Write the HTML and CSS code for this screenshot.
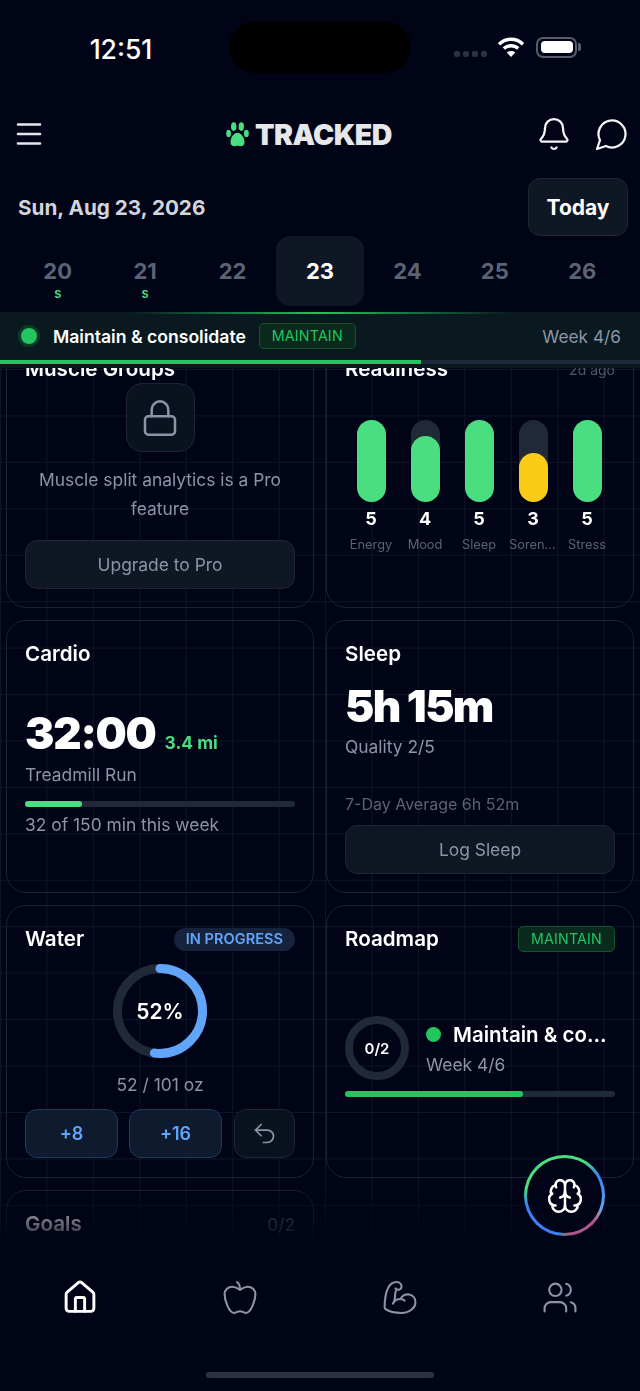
FILE: index.html
```html
<!DOCTYPE html>
<html lang="en">

<head>
  <meta charset="UTF-8">
  <meta name="viewport" content="width=device-width, initial-scale=1.0">
  <title>Tracked</title>
  <link rel="stylesheet" href="styles.css">
</head>

<body>
  <div class="app">
    <div class="status-bar">
      <div class="status-time">12:51</div>
      <div class="island"></div>
      <div class="status-right">
        <div class="signal"><span></span><span></span><span></span><span></span></div>
        <svg class="wifi" width="28" height="22" viewBox="0 0 28 22" fill="none" stroke="#fff" stroke-width="3.4">
          <path d="M2 8.2C9 1.6 19 1.6 26 8.2" />
          <path d="M6.8 12.6C11 8.8 17 8.8 21.2 12.6" />
          <path d="M14 21l-4.2-4.6c2.4-1.9 6-1.9 8.4 0z" fill="#fff" stroke="none" />
        </svg>
        <div class="battery"><div class="battery-fill"></div></div>
        <div class="battery-tip"></div>
      </div>
    </div>

    <header class="top-bar">
      <svg class="menu-icon" width="26" height="24" viewBox="0 0 26 24" fill="none" stroke="#e5e7eb" stroke-width="2.6" stroke-linecap="round">
        <path d="M2 2.5h22M2 12h22M2 21.5h22" />
      </svg>
      <div class="logo">
        <svg width="23" height="25" viewBox="0 0 23 25" fill="#4ade80">
          <ellipse cx="7.7" cy="4.6" rx="2.7" ry="4.3" />
          <ellipse cx="15.3" cy="4.6" rx="2.7" ry="4.3" />
          <ellipse cx="2.6" cy="11.4" rx="2.4" ry="3.7" />
          <ellipse cx="20.4" cy="11.4" rx="2.4" ry="3.7" />
          <path d="M11.5 10.8c-3.6 0-7 4.6-7 9.4 0 4.6 4.6 4.6 7 3.2 2.4 1.4 7 1.4 7-3.2 0-4.8-3.4-9.4-7-9.4z" />
        </svg>
        <span>TRACKED</span>
      </div>
      <div class="top-actions">
        <svg width="36" height="36" viewBox="0 0 24 24" fill="none" stroke="#f3f4f6" stroke-width="1.5" stroke-linecap="round" stroke-linejoin="round">
          <path d="M10.268 21a2 2 0 0 0 3.464 0" />
          <path d="M3.262 15.326A1 1 0 0 0 4 17h16a1 1 0 0 0 .74-1.673C19.41 13.956 18 12.499 18 8A6 6 0 0 0 6 8c0 4.499-1.411 5.956-2.738 7.326" />
        </svg>
        <svg width="36" height="36" viewBox="0 0 24 24" fill="none" stroke="#f3f4f6" stroke-width="1.5" stroke-linecap="round" stroke-linejoin="round">
          <path d="M7.9 20A9 9 0 1 0 4 16.1L2 22Z" />
        </svg>
      </div>
    </header>

    <div class="date-row">
      <div class="date-label">Sun, Aug 23, 2026</div>
      <button class="today-btn">Today</button>
    </div>

    <div class="week-strip">
      <div class="day"><span class="day-num">20</span><span class="day-mark">s</span></div>
      <div class="day"><span class="day-num">21</span><span class="day-mark">s</span></div>
      <div class="day"><span class="day-num">22</span></div>
      <div class="day selected"><span class="day-num">23</span></div>
      <div class="day"><span class="day-num">24</span></div>
      <div class="day"><span class="day-num">25</span></div>
      <div class="day"><span class="day-num">26</span></div>
    </div>

    <div class="phase-banner">
      <div class="phase-glow"></div>
      <div class="phase-row">
        <span class="phase-dot"></span>
        <span class="phase-name">Maintain &amp; consolidate</span>
        <span class="tag">MAINTAIN</span>
        <span class="phase-week">Week 4/6</span>
      </div>
      <div class="phase-progress"><div class="phase-progress-fill" style="width: 65.8%"></div></div>
    </div>

    <main class="scroller">
      <div class="cards">
        <section class="card">
          <h2 class="card-title">Muscle Groups</h2>
          <div class="lock-box">
            <svg width="40" height="40" viewBox="0 0 24 24" fill="none" stroke="#8b95a7" stroke-width="1.5" stroke-linecap="round" stroke-linejoin="round">
              <rect x="3" y="11" width="18" height="11" rx="2" />
              <path d="M7 11V7a5 5 0 0 1 10 0v4" />
            </svg>
          </div>
          <p class="pro-text">Muscle split analytics is a Pro feature</p>
          <button class="soft-btn pro-btn">Upgrade to Pro</button>
        </section>

        <section class="card">
          <div class="card-head">
            <h2 class="card-title">Readiness</h2>
            <span class="ago">2d ago</span>
          </div>
          <div class="readiness">
            <div class="metric">
              <div class="pill"><div class="pill-fill" style="height: 100%"></div></div>
              <div class="metric-val">5</div>
              <div class="metric-label">Energy</div>
            </div>
            <div class="metric">
              <div class="pill"><div class="pill-fill" style="height: 80%"></div></div>
              <div class="metric-val">4</div>
              <div class="metric-label">Mood</div>
            </div>
            <div class="metric">
              <div class="pill"><div class="pill-fill" style="height: 100%"></div></div>
              <div class="metric-val">5</div>
              <div class="metric-label">Sleep</div>
            </div>
            <div class="metric">
              <div class="pill"><div class="pill-fill warn" style="height: 60%"></div></div>
              <div class="metric-val">3</div>
              <div class="metric-label">Soreness</div>
            </div>
            <div class="metric">
              <div class="pill"><div class="pill-fill" style="height: 100%"></div></div>
              <div class="metric-val">5</div>
              <div class="metric-label">Stress</div>
            </div>
          </div>
        </section>

        <section class="card">
          <h2 class="card-title">Cardio</h2>
          <div class="cardio-main">
            <span class="big-num">32:00</span>
            <span class="cardio-dist">3.4 mi</span>
          </div>
          <div class="muted-line">Treadmill Run</div>
          <div class="bar cardio-bar"><div class="bar-fill light" style="width: 21%"></div></div>
          <div class="muted-line cardio-week">32 of 150 min this week</div>
        </section>

        <section class="card">
          <h2 class="card-title">Sleep</h2>
          <div class="big-num sleep-num">5h 15m</div>
          <div class="muted-line">Quality 2/5</div>
          <div class="sleep-avg">7-Day Average 6h 52m</div>
          <button class="soft-btn sleep-btn">Log Sleep</button>
        </section>

        <section class="card">
          <div class="card-head">
            <h2 class="card-title">Water</h2>
            <span class="status-pill">IN PROGRESS</span>
          </div>
          <div class="water-ring">
            <svg width="94" height="94" viewBox="0 0 94 94" fill="none" stroke-width="9">
              <circle cx="47" cy="47" r="42.5" stroke="#1f2937" />
              <circle cx="47" cy="47" r="42.5" stroke="#60a5fa" stroke-linecap="round" stroke-dasharray="139 267" transform="rotate(-90 47 47)" />
            </svg>
            <span class="ring-text">52%</span>
          </div>
          <div class="muted-line water-amount">52 / 101 oz</div>
          <div class="water-btns">
            <button class="water-btn">+8</button>
            <button class="water-btn">+16</button>
            <button class="water-btn undo">
              <svg width="27" height="27" viewBox="0 0 24 24" fill="none" stroke="#8b95a7" stroke-width="1.5" stroke-linecap="round" stroke-linejoin="round">
                <path d="M9 14 4 9l5-5" />
                <path d="M4 9h10.5a5.5 5.5 0 0 1 5.5 5.5a5.5 5.5 0 0 1-5.5 5.5H11" />
              </svg>
            </button>
          </div>
        </section>

        <section class="card">
          <div class="card-head">
            <h2 class="card-title">Roadmap</h2>
            <span class="tag">MAINTAIN</span>
          </div>
          <div class="road-row">
            <div class="road-ring">0/2</div>
            <div class="road-info">
              <div class="road-name-row">
                <span class="road-dot"></span>
                <span class="road-name">Maintain &amp; consolidate</span>
              </div>
              <div class="muted-line">Week 4/6</div>
            </div>
          </div>
          <div class="bar road-bar"><div class="bar-fill" style="width: 66%"></div></div>
        </section>

        <section class="card">
          <div class="card-head">
            <h2 class="card-title">Goals</h2>
            <span class="goal-count">0/2</span>
          </div>
        </section>
      </div>
    </main>

    <nav class="bottom-nav">
      <div class="nav-icons">
        <svg width="37" height="37" viewBox="0 0 24 24" fill="none" stroke="#fff" stroke-width="1.9" stroke-linecap="round" stroke-linejoin="round">
          <path d="M15 21v-8a1 1 0 0 0-1-1h-4a1 1 0 0 0-1 1v8" />
          <path d="M3 10a2 2 0 0 1 .709-1.528l7-5.999a2 2 0 0 1 2.582 0l7 5.999A2 2 0 0 1 21 10v9a2 2 0 0 1-2 2H5a2 2 0 0 1-2-2z" />
        </svg>
        <svg width="37" height="37" viewBox="0 0 24 24" fill="none" stroke="#8b95a7" stroke-width="1.35" stroke-linecap="round" stroke-linejoin="round">
          <path d="M12 20.94c1.5 0 2.75 1.06 4 1.06 3 0 6-8 6-12.22A4.91 4.91 0 0 0 17 5c-2.22 0-4 1.44-5 2-1-.56-2.78-2-5-2a4.9 4.9 0 0 0-5 4.78C2 14 5 22 8 22c1.25 0 2.5-1.06 4-1.06Z" />
          <path d="M10 2c1 .5 2 2 2 5" />
        </svg>
        <svg width="37" height="37" viewBox="0 0 24 24" fill="none" stroke="#8b95a7" stroke-width="1.35" stroke-linecap="round" stroke-linejoin="round">
          <path d="M12.409 13.017A5 5 0 0 1 22 15c0 3.866-4 7-9 7-4.077 0-8.153-.82-10.371-2.462-.426-.316-.631-.832-.62-1.362C2.118 12.723 2.627 2 10 2a3 3 0 0 1 3 3 2 2 0 0 1-2 2c-1.105 0-1.64-.444-2-1" />
          <path d="M15 14a5 5 0 0 0-7.584 2" />
          <path d="M9.964 6.825C8.019 7.977 9.5 13 8 15" />
        </svg>
        <svg width="37" height="37" viewBox="0 0 24 24" fill="none" stroke="#8b95a7" stroke-width="1.35" stroke-linecap="round" stroke-linejoin="round">
          <path d="M16 21v-2a4 4 0 0 0-4-4H6a4 4 0 0 0-4 4v2" />
          <circle cx="9" cy="7" r="4" />
          <path d="M22 21v-2a4 4 0 0 0-3-3.87" />
          <path d="M16 3.13a4 4 0 0 1 0 7.75" />
        </svg>
      </div>
      <div class="home-indicator"></div>
    </nav>

    <button class="ai-fab">
      <span class="ai-fab-inner">
        <svg width="38" height="38" viewBox="0 0 24 24" fill="none" stroke="#fff" stroke-width="1.6" stroke-linecap="round" stroke-linejoin="round">
          <path d="M12 18V5" />
          <path d="M15 13a4.17 4.17 0 0 1-3-4 4.17 4.17 0 0 1-3 4" />
          <path d="M17.598 6.5A3 3 0 1 0 12 5a3 3 0 1 0-5.598 1.5" />
          <path d="M17.997 5.125a4 4 0 0 1 2.526 5.77" />
          <path d="M18 18a4 4 0 0 0 2-7.464" />
          <path d="M19.967 17.483A4 4 0 1 1 12 18a4 4 0 1 1-7.967-.517" />
          <path d="M6 18a4 4 0 0 1-2-7.464" />
          <path d="M6.003 5.125a4 4 0 0 0-2.526 5.77" />
        </svg>
      </span>
    </button>
  </div>
</body>

</html>
```

FILE: styles.css
```css
* {
  box-sizing: border-box;
}

body {
  margin: 0;
  background-color: #010417;
  color: #fff;
  font-family: Inter, "Liberation Sans", sans-serif;
}

button {
  font-family: inherit;
  cursor: pointer;
}

.app {
  position: relative;
  width: 640px;
  height: 1391px;
  display: flex;
  flex-direction: column;
  overflow: hidden;
  background-color: #010417;
}

/* status bar */
.status-bar {
  height: 100px;
  padding-top: 21px;
  display: flex;
  align-items: flex-start;
}

.status-time {
  width: 229px;
  padding-left: 13px;
  height: 52px;
  line-height: 56px;
  text-align: center;
  font-size: 26.5px;
  font-weight: 500;
}

.island {
  width: 182px;
  height: 52px;
  border-radius: 26px;
  background-color: #000;
}

.status-right {
  height: 52px;
  padding-left: 43px;
  display: flex;
  align-items: center;
}

.signal {
  display: flex;
  gap: 3px;
  margin-top: 14px;
}

.signal span {
  width: 6px;
  height: 6px;
  border-radius: 2px;
  background-color: #2d3240;
}

.wifi {
  margin-left: 10px;
}

.battery {
  width: 41px;
  height: 21px;
  margin-left: 11px;
  padding: 2.5px;
  border: 2px solid #555c6e;
  border-radius: 7px;
}

.battery-fill {
  height: 100%;
  border-radius: 4px;
  background-color: #fff;
}

.battery-tip {
  width: 3px;
  height: 8px;
  margin-left: 1px;
  border-radius: 0 2px 2px 0;
  background-color: #555c6e;
}

/* header */
.top-bar {
  height: 68px;
  padding: 0 10px 0 16px;
  display: flex;
  align-items: center;
}

.logo {
  margin-left: 184px;
  display: flex;
  align-items: center;
  gap: 6px;
  color: #e5e7eb;
  font-size: 28.5px;
  font-weight: 900;
  letter-spacing: -0.6px;
}

.top-actions {
  margin-left: auto;
  display: flex;
  gap: 22px;
}

.date-row {
  height: 68px;
  padding: 10px 12px 0 18px;
  display: flex;
  align-items: flex-start;
  justify-content: space-between;
}

.date-label {
  height: 58px;
  line-height: 60px;
  color: #d1d5db;
  font-size: 20.7px;
  font-weight: 700;
}

.today-btn {
  width: 100px;
  height: 58px;
  border: 1px solid #1c2636;
  border-radius: 12px;
  background-color: #0f1724;
  color: #fff;
  font-size: 21px;
  font-weight: 700;
}

/* week */
.week-strip {
  height: 76px;
  padding: 0 14px 6px;
  display: flex;
}

.day {
  flex: 1;
  height: 70px;
  padding-top: 21px;
  border-radius: 14px;
  display: flex;
  flex-direction: column;
  align-items: center;
}

.day.selected {
  background-color: #0f1724;
}

.day-num {
  line-height: 28px;
  color: #5a6374;
  font-size: 22px;
  font-weight: 700;
}

.day.selected .day-num {
  color: #fff;
}

.day-mark {
  margin-top: 1px;
  line-height: 14px;
  color: #4ade80;
  font-size: 13px;
  font-weight: 600;
}

/* phase banner */
.phase-banner {
  height: 56px;
  display: flex;
  flex-direction: column;
  background-color: #09191f;
}

.phase-glow {
  height: 2px;
  background: linear-gradient(90deg, transparent 20%, #22c55e 50%, transparent 80%);
}

.phase-row {
  height: 46px;
  padding: 0 19px 2px 18px;
  display: flex;
  align-items: center;
}

.phase-dot {
  width: 22px;
  height: 22px;
  border: 3px solid #0d3a27;
  border-radius: 50%;
  background-color: #22c55e;
}

.phase-name {
  margin-left: 13px;
  font-size: 17.6px;
  font-weight: 600;
}

.tag {
  height: 26px;
  padding: 0 12px;
  border: 1px solid #14532d;
  border-radius: 5px;
  background-color: #0a2a1e;
  color: #22c55e;
  font-size: 14.2px;
  line-height: 24px;
  letter-spacing: 0.2px;
}

.phase-row .tag {
  margin-left: 13px;
}

.phase-week {
  margin-left: auto;
  color: #8b95a7;
  font-size: 17.3px;
}

.phase-progress {
  height: 4px;
  background-color: #1f2937;
}

.phase-progress-fill {
  height: 100%;
  background-color: #22c55e;
}

/* scrolling cards */
.scroller {
  flex: 1;
  min-height: 0;
  overflow: hidden;
  background-image:
    linear-gradient(#0e1526 1px, transparent 1px),
    linear-gradient(90deg, #0e1526 1px, transparent 1px);
  background-size: 46.45px 46.45px;
  background-position: 0 1px;
  -webkit-mask-image: linear-gradient(to bottom, #000 calc(100% - 66px), transparent 100%);
  mask-image: linear-gradient(to bottom, #000 calc(100% - 66px), transparent 100%);
}

.cards {
  margin-top: -33px;
  padding: 0 6px;
  display: grid;
  grid-template-columns: 308px 308px;
  grid-auto-rows: 273px;
  gap: 12px;
}

.card {
  padding: 18px 18px 19px;
  border: 1px solid #1a2332;
  border-radius: 20px;
  display: flex;
  flex-direction: column;
}

.card-title {
  margin: 0;
  line-height: 30px;
  font-size: 20.6px;
  font-weight: 600;
}

.card-head {
  display: flex;
  align-items: center;
  justify-content: space-between;
}

.ago {
  color: #4f5869;
  font-size: 14px;
}

.muted-line {
  line-height: 28px;
  color: #8b95a7;
  font-size: 17.4px;
}

.soft-btn {
  height: 49px;
  flex-shrink: 0;
  border: 1px solid #1c2636;
  border-radius: 12px;
  background-color: #0f1724;
  color: #8b95a7;
  font-size: 17.4px;
}

.lock-box {
  width: 69px;
  height: 69px;
  flex-shrink: 0;
  margin: -1px auto 0;
  border: 1px solid #1c2636;
  border-radius: 16px;
  background-color: #0a111f;
  display: flex;
  align-items: center;
  justify-content: center;
}

.pro-text {
  margin: 13px 0 0;
  line-height: 29px;
  text-align: center;
  color: #8b95a7;
  font-size: 17.4px;
}

.pro-btn {
  margin-top: 17px;
}

/* readiness */
.readiness {
  margin: 36px 0 0 -1px;
  display: flex;
}

.metric {
  width: 54px;
  display: flex;
  flex-direction: column;
  align-items: center;
}

.pill {
  width: 29px;
  height: 82px;
  border-radius: 15px;
  background-color: #1f2937;
  display: flex;
  align-items: flex-end;
}

.pill-fill {
  width: 100%;
  border-radius: 15px;
  background-color: #4ade80;
}

.pill-fill.warn {
  background-color: #facc15;
}

.metric-val {
  margin-top: 5px;
  line-height: 24px;
  font-size: 18px;
  font-weight: 700;
}

.metric-label {
  width: 100%;
  margin-top: 5px;
  padding: 0 3px;
  overflow: hidden;
  white-space: nowrap;
  text-overflow: ellipsis;
  text-align: center;
  line-height: 18px;
  color: #5a6374;
  font-size: 12.8px;
}

/* cardio + sleep */
.cardio-main {
  margin-top: 37px;
  height: 55px;
  display: flex;
  align-items: baseline;
  gap: 9px;
}

.big-num {
  line-height: 54px;
  font-size: 44px;
  font-weight: 900;
  letter-spacing: -1.25px;
}

.cardio-dist {
  color: #4ade80;
  font-size: 17.4px;
  font-weight: 700;
}

.bar {
  height: 6px;
  border-radius: 3px;
  background-color: #1f2937;
}

.bar-fill {
  height: 100%;
  border-radius: 3px;
  background-color: #22c55e;
}

.bar-fill.light {
  background-color: #4ade80;
}

.cardio-bar {
  margin-top: 12px;
}

.cardio-week {
  margin-top: 4px;
}

.sleep-num {
  margin-top: 11px;
  line-height: 53px;
  letter-spacing: -1.6px;
}

.sleep-avg {
  margin-top: 30px;
  line-height: 26px;
  color: #5a6374;
  font-size: 16px;
}

.sleep-btn {
  margin-top: 8px;
}

/* water */
.status-pill {
  height: 23px;
  padding: 0 12px;
  border-radius: 12px;
  background-color: #16233c;
  color: #60a5fa;
  font-size: 14.6px;
  font-weight: 600;
  line-height: 23px;
}

.water-ring {
  position: relative;
  width: 94px;
  height: 94px;
  flex-shrink: 0;
  margin: 10px auto 0;
}

.water-ring svg {
  display: block;
}

.ring-text {
  position: absolute;
  inset: 0;
  display: flex;
  align-items: center;
  justify-content: center;
  font-size: 21px;
  font-weight: 600;
}

.water-amount {
  margin-top: 13px;
  text-align: center;
}

.water-btns {
  margin-top: 10px;
  display: flex;
  gap: 11px;
}

.water-btn {
  width: 93px;
  height: 49px;
  border: 1px solid #1e3a5f;
  border-radius: 12px;
  background-color: #0e1a2e;
  color: #60a5fa;
  font-size: 18px;
  font-weight: 600;
  display: flex;
  align-items: center;
  justify-content: center;
}

.water-btn.undo {
  width: 61px;
  margin-left: 1px;
  border-color: #1c2636;
  background-color: #0a111f;
}

/* roadmap */
.road-row {
  margin-top: 62px;
  display: flex;
  gap: 17px;
}

.road-ring {
  width: 64px;
  height: 64px;
  flex-shrink: 0;
  border: 8px solid #1f2937;
  border-radius: 50%;
  display: flex;
  align-items: center;
  justify-content: center;
  font-size: 15px;
  font-weight: 600;
}

.road-info {
  min-width: 0;
  flex: 1;
  display: flex;
  flex-direction: column;
}

.road-info .muted-line {
  margin-top: -1px;
}

.road-name-row {
  display: flex;
  align-items: center;
  gap: 12px;
  height: 36px;
}

.road-dot {
  width: 15px;
  height: 15px;
  flex-shrink: 0;
  border-radius: 50%;
  background-color: #22c55e;
}

.road-name {
  overflow: hidden;
  white-space: nowrap;
  text-overflow: ellipsis;
  font-size: 20.5px;
  font-weight: 600;
}

.road-bar {
  margin-top: 11px;
}

.goal-count {
  color: #4f5869;
  font-size: 17.4px;
}

/* bottom nav */
.bottom-nav {
  height: 141px;
  flex-shrink: 0;
  padding-top: 29px;
  display: flex;
  flex-direction: column;
}

.nav-icons {
  display: flex;
}

.nav-icons svg {
  flex: 0 0 160px;
}

.home-indicator {
  width: 228px;
  height: 6px;
  margin: 56px auto 0;
  border-radius: 3px;
  background-color: #2d3240;
}

/* floating button */
.ai-fab {
  position: absolute;
  left: 524px;
  top: 1155px;
  width: 81px;
  height: 81px;
  padding: 3px;
  border: 0;
  border-radius: 50%;
  background: conic-gradient(#4ade80 0deg, #4ade80 30deg, #3b82f6 60deg, #60a5fa 110deg, #8b95a7 118deg, #b0568e 130deg, #b0568e 170deg, #777 180deg, #3b82f6 190deg, #3b82f6 255deg, #4ade80 280deg, #4ade80 360deg);
}

.ai-fab-inner {
  width: 100%;
  height: 100%;
  border-radius: 50%;
  background-color: #010417;
  display: flex;
  align-items: center;
  justify-content: center;
}
```
